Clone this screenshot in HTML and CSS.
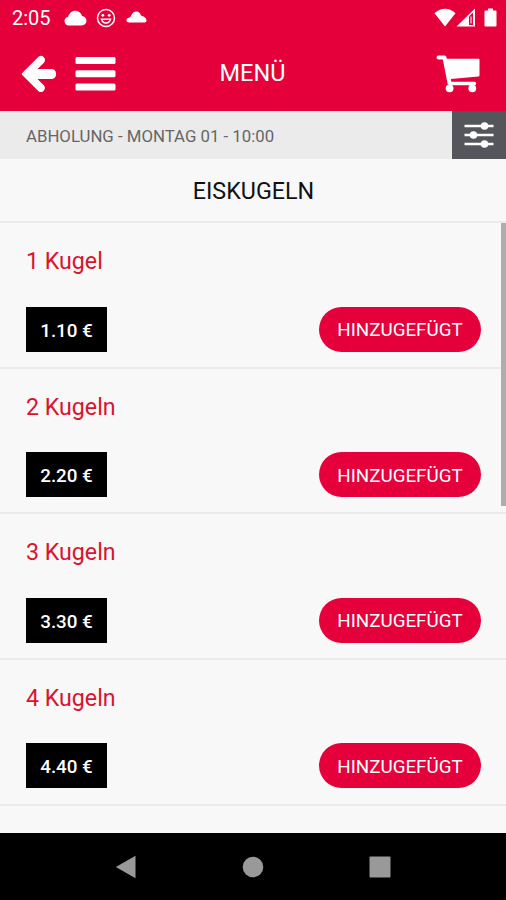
FILE: index.html
```html
<!doctype html>
<html lang="de">
    <head>
        <meta charset="UTF-8" />
        <meta name="viewport" content="width=device-width, initial-scale=1.0" />
        <title>Menü</title>
        <link rel="stylesheet" href="styles.css">
    </head>
    <body>
        <div class="screen">
            <header class="header">
                <div class="status">
                    <span class="time">2:05</span>
                    <svg class="cloud" width="23" height="16" viewBox="0 0 23 16"><path d="M5 15.500C2.300 15.500.5 13.500.5 11c0-2.200 1.500-4 3.600-4.300C5.300 3 8 .8 11.200.8c3.300 0 6 2 6.800 5.300 2.700.2 4.500 2.200 4.500 4.700 0 2.700-2 4.700-4.700 4.700z" fill="#fff"/></svg>
                    <svg class="smiley" width="20" height="20" viewBox="0 0 20 20">
                        <circle cx="10" cy="10" r="8.500" fill="none" stroke="#fff" stroke-width="1.500"/>
                        <circle cx="6.800" cy="7.300" r="1.400" fill="#fff"/>
                        <circle cx="13.200" cy="7.300" r="1.400" fill="#fff"/>
                        <path d="M5.500 11.300h9c-.6 2.200-2.300 3.700-4.500 3.700s-3.900-1.500-4.500-3.700z" fill="none" stroke="#fff" stroke-width="1.500"/>
                    </svg>
                    <svg class="cloud-small" width="21" height="12" viewBox="0 0 21 12"><path d="M3 11.500C1.400 11.500.5 10.600.5 9.300c0-1.400 1.200-2.300 2.800-2.700C4.300 6.300 4.800 5.500 5.300 4.300 6.300 2 8 .5 10.300.5c2.400 0 3.700 1.300 4.500 3.400.3.700.8 1 1.500 1.200 2.500.6 4.200 2.400 4.200 4.700 0 1.200-.7 1.700-1.900 1.700z" fill="#fff"/></svg>
                    <div class="status-right">
                        <svg width="22" height="20" viewBox="0 0 22 20"><path d="M.5 5.200Q11-3.500 21.500 5.200L11 18.500z" fill="#fff"/></svg>
                        <svg width="20" height="20" viewBox="0 0 20 20">
                            <path d="M.5 18.500 19 .5v18z" fill="#fff"/>
                            <path d="M13 8.500 17 4.500v12.500h-4z" fill="#e5003b"/>
                            <path d="M14.500 8.500h1v7h-1z" fill="#fff"/>
                        </svg>
                        <svg class="battery" width="13" height="20" viewBox="0 0 13 20"><path d="M4 .5h5v2h2.500q1 0 1 1v14q0 1-1 1h-10q-1 0-1-1v-14q0-1 1-1H4z" fill="#fff"/></svg>
                    </div>
                </div>
                <div class="toolbar">
                    <div class="toolbar-side">
                        <svg width="36" height="38" viewBox="0 0 36 38"><path d="M1 18.300 17.500 1.700q3-2 5.300.5t.2 5.500L16.500 14H31q4 .3 4 5t-4 5H16.500l6.500 6.500q2 2.700-.2 5.200t-5.300.5L1 19.700q-.7-.7 0-1.400z" fill="#fff"/></svg>
                        <svg width="41" height="36" viewBox="0 0 41 36"><path d="M2 1h37q1.500 0 1.500 1.500v4q0 1.500-1.500 1.500H2Q.5 8 .5 6.500v-4Q.5 1 2 1zM2 14.300h37q1.500 0 1.500 1.500v4q0 1.500-1.500 1.500H2q-1.500 0-1.500-1.500v-4q0-1.500 1.500-1.500zM2 27.500h37q1.500 0 1.500 1.500v4q0 1.500-1.500 1.500H2Q.5 34.500.5 33v-4q0-1.500 1.500-1.500z" fill="#fff"/></svg>
                    </div>
                    <h1>MENÜ</h1>
                    <div class="toolbar-side cart">
                        <svg width="44" height="38" viewBox="0 0 44 38">
                            <path d="M2.500 2.500h6L13.500 28" fill="none" stroke="#fff" stroke-width="4" stroke-linecap="round" stroke-linejoin="round"/>
                            <path d="M9.500 3.800H42.500q1 0 1 1v15.500q0 1.200-1.200 1.300L15 24v2.800h23.500q1.700 0 1.700 1.700t-1.700 1.700H13.500z" fill="#fff"/>
                            <circle cx="13.600" cy="33.300" r="3.900" fill="#fff"/>
                            <circle cx="36.300" cy="33.300" r="3.900" fill="#fff"/>
                        </svg>
                    </div>
                </div>
            </header>

            <div class="pickup">
                <span>ABHOLUNG - MONTAG 01 - 10:00</span>
                <button class="filter">
                    <svg width="30" height="26" viewBox="0 0 30 26">
                        <path d="M.5 4h29M.5 13h29M.5 22h29" stroke="#fff" stroke-width="2.600"/>
                        <circle cx="20.500" cy="4" r="3.800" fill="#fff"/>
                        <circle cx="9.500" cy="13" r="3.800" fill="#fff"/>
                        <circle cx="20.500" cy="22" r="3.800" fill="#fff"/>
                    </svg>
                </button>
            </div>

            <h2>EISKUGELN</h2>

            <div class="list">
                <div class="item">
                    <h3>1 Kugel</h3>
                    <div class="item-row">
                        <span class="price">1.10 €</span>
                        <button class="add">HINZUGEFÜGT</button>
                    </div>
                </div>
                <div class="item">
                    <h3>2 Kugeln</h3>
                    <div class="item-row">
                        <span class="price">2.20 €</span>
                        <button class="add">HINZUGEFÜGT</button>
                    </div>
                </div>
                <div class="item">
                    <h3>3 Kugeln</h3>
                    <div class="item-row">
                        <span class="price">3.30 €</span>
                        <button class="add">HINZUGEFÜGT</button>
                    </div>
                </div>
                <div class="item">
                    <h3>4 Kugeln</h3>
                    <div class="item-row">
                        <span class="price">4.40 €</span>
                        <button class="add">HINZUGEFÜGT</button>
                    </div>
                </div>
                <div class="scrollbar"></div>
            </div>

            <!-- Android navigation -->
            <nav class="navbar">
                <svg width="22" height="24" viewBox="0 0 22 24"><path d="M.8 12 20.500.8v22.400z" fill="#999"/></svg>
                <svg width="22" height="22" viewBox="0 0 22 22"><circle cx="11" cy="11" r="10.300" fill="#999"/></svg>
                <svg width="22" height="22" viewBox="0 0 22 22"><rect x=".5" y=".5" width="21" height="21" rx="1" fill="#999"/></svg>
            </nav>
        </div>
    </body>
</html>
```
FILE: styles.css
```css
* {
    box-sizing: border-box;
}
body {
    font-family: Roboto, sans-serif;
    background-color: #f8f8f8;
    margin: 0;
}
h1, h2, h3 {
    margin: 0;
    font-weight: 400;
}
svg {
    display: block;
    flex: none;
}
button {
    font-family: inherit;
    border: none;
    padding: 0;
    cursor: pointer;
}
.screen {
    display: flex;
    flex-direction: column;
    height: 900px;
    overflow: hidden;
}
.header {
    height: 111px;
    background-color: #e5003b;
    color: #fff;
}
.status {
    display: flex;
    align-items: center;
    height: 35px;
    padding: 0 9px 0 12px;
}
.time {
    width: 52px;
    font-size: 20px;
}
.smiley {
    margin: 0 10px 0 9px;
}
.cloud-small {
    margin-bottom: 2px;
}
.status-right {
    display: flex;
    margin-left: auto;
}
.battery {
    margin-left: 8px;
}
.toolbar {
    display: grid;
    grid-template-columns: 1fr auto 1fr;
    align-items: center;
    height: 76px;
    padding: 2px 26px 0 21px;
}
.toolbar-side {
    display: flex;
    align-items: center;
    gap: 18px;
}
.cart {
    justify-content: flex-end;
}
h1 {
    padding: 0 0 2px 4px;
    font-size: 23.5px;
}
.pickup {
    display: flex;
    justify-content: space-between;
    align-items: center;
    height: 48px;
    padding-left: 26px;
    background-color: #ebebeb;
    color: #666;
    font-size: 16.8px;
}
.pickup span {
    padding-top: 2px;
}
.filter {
    display: flex;
    justify-content: center;
    align-items: center;
    width: 54px;
    height: 48px;
    background-color: #54565b;
}
h2 {
    height: 64px;
    padding-left: 1px;
    border-bottom: 2px solid #eaebeb;
    color: #111;
    font-size: 23.3px;
    line-height: 65px;
    text-align: center;
}
.list {
    position: relative;
    flex: 1;
    overflow: hidden;
}
.item {
    height: 145.67px;
    padding: 22px 25px 0 26px;
    border-bottom: 2px solid #eaebeb;
}
h3 {
    height: 61.5px;
    color: #d9142f;
    font-size: 23.2px;
    line-height: 33px;
}
.item-row {
    display: flex;
    justify-content: space-between;
}
.price {
    width: 81px;
    height: 45px;
    background-color: #000;
    color: #fff;
    font-size: 18.8px;
    font-weight: 500;
    line-height: 48px;
    text-align: center;
}
.add {
    width: 162px;
    height: 45px;
    padding-top: 2px;
    border-radius: 23px;
    background-color: #e5003b;
    color: #fff;
    font-size: 18.8px;
}
.scrollbar {
    position: absolute;
    top: 0;
    right: 0;
    width: 5px;
    height: 283px;
    background-color: #adadad;
}
.navbar {
    display: flex;
    justify-content: space-between;
    align-items: center;
    height: 67px;
    padding: 0 115px;
    background-color: #000;
}
```
